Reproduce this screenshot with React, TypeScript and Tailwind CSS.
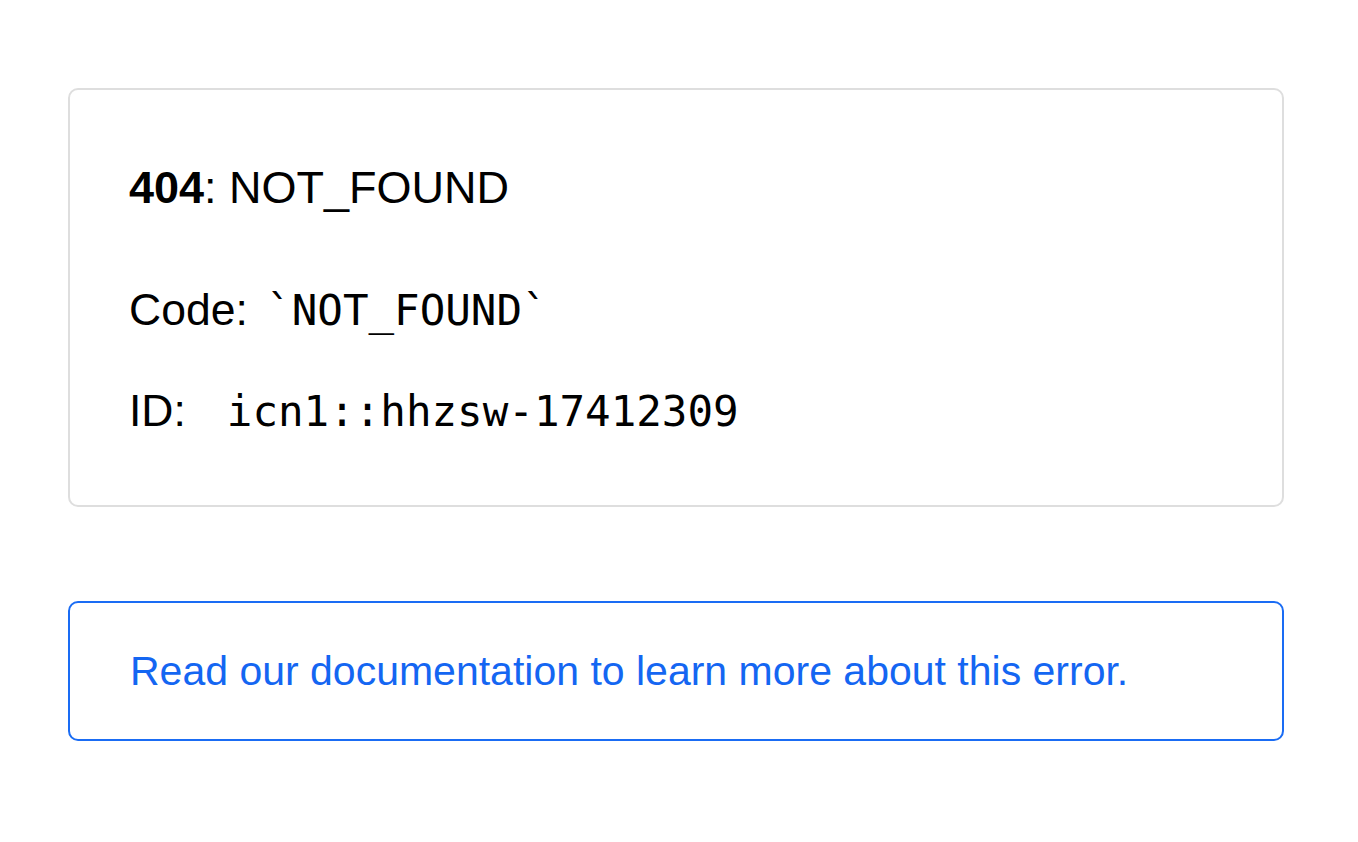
export default function App() {
  const sans = { fontFamily: '"Liberation Sans", Arial, sans-serif' }
  return (
    <div className="min-h-screen bg-white pt-[88px] pl-[68px]" style={sans}>
      <div className="w-[1216px]">
        <div className="rounded-[10px] border-2 border-[#dedede] pl-[59px] pt-[75px] pb-[71px] text-black">
          <h1 className="text-[45px] leading-[46px] font-normal">
            <span className="font-bold">404</span>: NOT_FOUND
          </h1>
          <p className="mt-[77px] text-[44.5px] leading-[44px]">
            Code:{' '}
            <span className="ml-[6px] font-['DejaVu_Sans_Mono',monospace] text-[42.5px]">`NOT_FOUND`</span>
          </p>
          <p className="mt-[56px] text-[44.5px] leading-[44px]">
            ID:{' '}
            <span className="ml-[3px] font-['DejaVu_Sans_Mono',monospace] text-[42.5px] whitespace-pre"> icn1::hhzsw-17412309</span>
          </p>
        </div>
        <a
          href="#"
          className="mt-[94px] flex h-[140px] items-center rounded-[10px] border-2 border-[#1a6cf4] pl-[60px] text-[41px] leading-[41px] text-[#1466f2]"
        >
          Read our documentation to learn more about this error.
        </a>
      </div>
    </div>
  )
}
